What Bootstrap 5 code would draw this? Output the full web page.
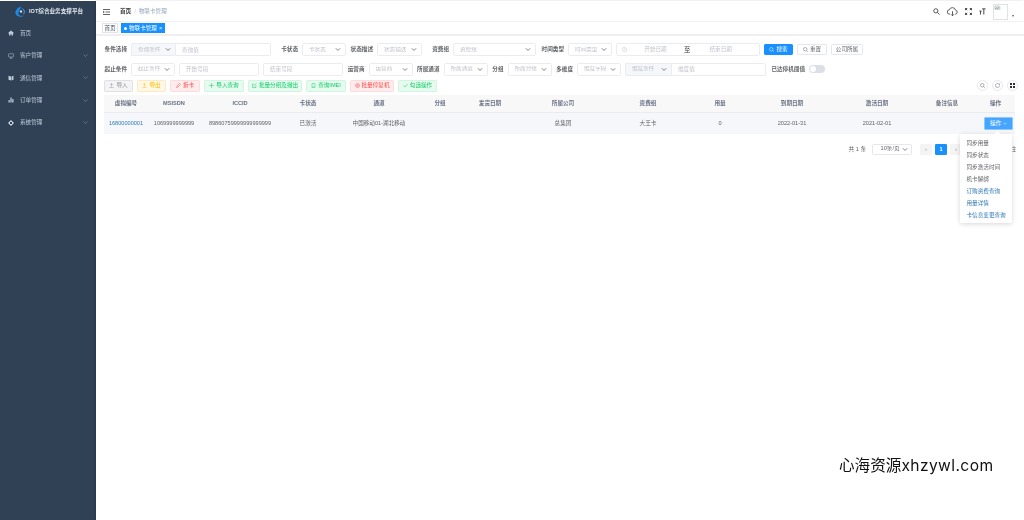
<!DOCTYPE html>
<html lang="zh-CN">
<head>
<meta charset="utf-8">
<title>物联卡管理</title>
<link href="https://cdn.jsdelivr.net/npm/bootstrap@5.3.0/dist/css/bootstrap.min.css" rel="stylesheet">
<style>
html,body{height:520px;overflow:hidden;background:#fff;}
body{font-family:"Liberation Sans","Noto Sans CJK SC",sans-serif;font-size:5.6px;color:#606266;line-height:1.2;}
.app-shell{height:520px;position:relative;padding-top:1px;}
.soft-view{filter:blur(.3px);}
.side-pane{width:96px;flex:none;background:#304156;color:#bfcbd9;}
.side-logo{height:21px;padding-left:14px;gap:3px;color:#dfe6ee;font-weight:700;font-size:5.6px;}
.side-row{height:22.4px;padding:0 8px;gap:6px;color:#bfcbd9;}
.side-row span{flex:1;}
.main-pane{min-width:0;box-shadow:-1px 0 2px rgba(0,0,0,.18);}
.top-head{margin-top:1px;height:20px;padding:0 8px 0 7px;gap:7px;border-bottom:1px solid #f2f2f2;}
.crumb-line{padding-left:3px;}
.crumb-now{color:#97a8be;}
.crumb-home{color:#303133;font-weight:700;}
.crumb-sep{color:#c0c4cc;margin:0 3px;}
.tab-bar{height:14px;padding:1px 6px 2px;gap:3px;border-bottom:2px solid #efefef;}
.tab-plain{border:1px solid #e0e3ea;width:16px;height:10.4px;color:#495060;}
.tab-live{background:#1890ff;color:#fff;width:44px;height:10.4px;gap:2px;}
.tab-dot{width:3.2px;height:3.2px;border-radius:50%;background:#fff;}
.work-area{padding:7px 8px 0;}
.form-line{gap:4px;height:13.4px;margin-bottom:6.2px;}
.field-tag{color:#606266;font-weight:700;text-align:right;white-space:nowrap;flex:none;}
.form-select.mini,.form-control.mini{height:13.4px;min-height:0;font-size:5.6px;line-height:1;padding:0 6px;border:1px solid #e9ecf1;border-radius:1.6px;color:#c0c4cc;box-shadow:none;flex:none;}
.form-select.mini{background-size:6px 5px;background-position:right 4px center;padding-right:10px;}
.form-control.mini::placeholder{color:#c0c4cc;opacity:1;}
.form-select.mini:disabled,.form-select.off{background-color:#f5f7fa;}
.pair{display:flex;flex:none;}
.pair .form-select.mini{border-radius:1.6px 0 0 1.6px;border-right:0;}
.pair .form-control.mini{border-radius:0 1.6px 1.6px 0;}
.wd-12{width:12px}.wd-17{width:17.5px}.wd-23{width:23px}.wd-24{width:24px}.wd-35{width:35px}
.wd-44{width:44px}.wd-45{width:45px}.wd-46{width:46px}.wd-80{width:80px}.wd-83{width:83px}.wd-95{width:95px}.wd-96{width:96px}
.date-box{width:144px;height:13.4px;border:1px solid #e9ecf1;border-radius:1.6px;color:#c0c4cc;padding:0 8px 0 5px;flex:none;}
.date-from{width:57px;text-align:center;flex:none;}
.date-till{flex:1;text-align:center;}
.to-word{flex:none;color:#303133;font-size:6.4px;}
.act-btn{height:11.6px;font-size:5.6px;line-height:1;padding:0;border-radius:1.2px;border:1px solid #e4e7ed;background:#fff;color:#606266;display:inline-flex;align-items:center;justify-content:center;gap:2px;flex:none;}
.act-blue{background:#1890ff;border-color:#1890ff;color:#fff;}
.wb-29{width:29px}.wb-30{width:30px}.wb-32{width:32px}.wb-40{width:40px}.wb-44{width:44px}.wb-54{width:54px}.wb-39{width:39px}
.tone-gray{background:#f4f4f5;border-color:#e0e1e4;color:#909399;}
.tone-amber{background:#fff8e6;border-color:#ffeabf;color:#ffba00;}
.tone-red{background:#ffeded;border-color:#ffdbdb;color:#ff4949;}
.tone-green{background:#e7faf0;border-color:#d0f5e0;color:#13ce66;}
.tool-line{height:12px;margin-bottom:3px;margin-top:-2.2px;}
.tool-set{gap:4px;margin-right:-2px;}
.round-tool{width:11px;height:11px;border:1px solid #e4e7ed;border-radius:50%;background:#fff;}
.grid-table{table-layout:fixed;width:911px;margin:0;font-size:5.6px;color:#606266;}
.grid-table th,.grid-table td{padding:0;text-align:center;vertical-align:middle;border-bottom:0;white-space:nowrap;}
.grid-table th{height:17.4px;background:#f8f8f9;color:#6a7183;font-weight:700;border-bottom:1px solid #e8ecf2;}
.grid-table td{height:21.6px;background:#f5f7fa;color:#606266;}
.cw-44{width:44px}.cw-52{width:52px}.cw-80{width:80px}.cw-56{width:56px}.cw-86{width:86px}.cw-36{width:36px}.cw-64{width:64px}.cw-82{width:82px}.cw-88{width:88px}.cw-58{width:58px}.cw-39{width:39px}
.id-link{color:#337ab7;text-decoration:none;}
.op-holder{position:relative;display:block;}
.op-btn{width:29px;height:13px;margin-left:8px;background:#46a6ff;border:1px solid #8cc8ff;color:#fff;border-radius:1.2px;font-size:5.6px;padding:0;display:flex;align-items:center;justify-content:center;gap:2px;}
.op-menu.dropdown-menu{position:absolute;display:block;top:17.5px;right:3px;left:auto;width:52px;min-width:0;padding:2.5px 0;margin:0;border:0;border-radius:1.6px;font-size:5.6px;box-shadow:0 1px 5px rgba(0,0,0,.16);z-index:5;}
.op-menu::before{content:"";position:absolute;top:-2.5px;right:12px;width:5px;height:5px;background:#fff;transform:rotate(45deg);}
.op-menu .dropdown-item{height:12px;line-height:12px;padding:0 0 0 6.5px;color:#606266;white-space:nowrap;background:transparent;text-align:left;}
.op-menu .dropdown-item.lk{color:#337ab7;}
.page-line{margin-top:9.6px;gap:6px;height:11.4px;}
.page-select.form-select{width:40px;height:11.4px;min-height:0;padding:0 8px 0 7.6px;font-size:5.6px;line-height:1;color:#606266;border:1px solid #e4e7ed;border-radius:1.2px;background-size:6px 5px;background-position:right 3px center;flex:none;}
.pager{gap:4px;margin:0 0 0 2px;}
.pager .page-link{width:12px;height:11.4px;padding:0;border:0;border-radius:1.2px !important;background:#f4f4f5;color:#909399;font-size:5.6px;display:flex;align-items:center;justify-content:center;margin:0;}
.pager .active .page-link{background:#1890ff;color:#fff;font-weight:700;}
.goto-word{color:#606266;width:33px;text-align:right;}
.switch-pill{width:16px;height:8px;background:#dcdfe6;border-radius:4px;flex:none;padding:.8px;}
.switch-knob{width:6.4px;height:6.4px;background:#fff;border-radius:50%;display:block;}
.broken-pic{width:15px;height:16px;border:1px solid #e2e2e2;display:block;}
.caret-mark{font-size:4px;width:4px;color:#5a5e66;align-self:flex-end;margin:0 0 2px -3px;overflow:hidden;}
.water-mark{position:absolute;left:839px;top:455px;font-family:"Inter","Noto Sans CJK SC",sans-serif;font-size:15.6px;line-height:22px;color:#111;white-space:nowrap;}
.water-latin{letter-spacing:.4px;}
</style>
</head>
<body>
<div class="app-shell d-flex">
  <aside class="side-pane soft-view d-flex flex-column">
    <div class="side-logo d-flex align-items-center">
      <svg width="12" height="12" viewBox="0 0 24 24" fill="none"><path d="M15 1C7 3 2 9 3 15c1 6 10 9 18 4-5 1-11 1-12-3-1-5 3-9 6-15Z" fill="#1e88e5"/><path d="M17 5c4 3 5 8 2 11" stroke="#4ba3f0" stroke-width="2"/><circle cx="14" cy="11" r="2.400" fill="#bfe0ff"/></svg>
      <span>IOT综合业务支撑平台</span>
    </div>
    <div class="side-row d-flex align-items-center">
      <svg width="6" height="6" viewBox="0 0 12 12" fill="#bfcbd9"><path d="M6 1 0 6l1 1 1-.8V11h3V8h2v3h3V6.2l1 .8 1-1Z"/></svg><span>首页</span>
    </div>
    <div class="side-row d-flex align-items-center">
      <svg width="6" height="6" viewBox="0 0 12 12" fill="none" stroke="#bfcbd9"><rect x="1" y="1.500" width="10" height="6.500" rx="1"/><path d="M6 8v2.500M3.500 10.500h5"/></svg><span>客户管理</span>
      <svg width="5" height="3" viewBox="0 0 10 6" fill="none" stroke="#7f8ea3" stroke-width="1.200"><path d="m1 1 4 4 4-4"/></svg>
    </div>
    <div class="side-row d-flex align-items-center">
      <svg width="6" height="6" viewBox="0 0 12 12" fill="#bfcbd9"><path d="M1 1.500 6 3v8L1 9.500ZM7 3l4-1.500v8L7 11Z"/></svg><span>通信管理</span>
      <svg width="5" height="3" viewBox="0 0 10 6" fill="none" stroke="#7f8ea3" stroke-width="1.200"><path d="m1 1 4 4 4-4"/></svg>
    </div>
    <div class="side-row d-flex align-items-center">
      <svg width="6" height="6" viewBox="0 0 12 12" fill="#bfcbd9"><path d="M1 6h2.500v5H1ZM4.800 1h2.500v10H4.800ZM8.500 4H11v7H8.500Z"/></svg><span>订单管理</span>
      <svg width="5" height="3" viewBox="0 0 10 6" fill="none" stroke="#7f8ea3" stroke-width="1.200"><path d="m1 1 4 4 4-4"/></svg>
    </div>
    <div class="side-row d-flex align-items-center">
      <svg width="6" height="6" viewBox="0 0 12 12" fill="none" stroke="#dfe6ee" stroke-width="2"><circle cx="6" cy="6" r="3.500"/><path d="M6 0v2M6 10v2M0 6h2M10 6h2" stroke-width="1.500"/></svg><span>系统管理</span>
      <svg width="5" height="3" viewBox="0 0 10 6" fill="none" stroke="#7f8ea3" stroke-width="1.200"><path d="m1 1 4 4 4-4"/></svg>
    </div>
  </aside>

  <main class="main-pane soft-view flex-grow-1">
    <header class="top-head d-flex align-items-center">
      <svg width="7" height="6" viewBox="0 0 14 12" fill="none" stroke="#303133" stroke-width="1.500"><path d="M0 1h14M5 6h9M0 11h14M0 4l2.500 2L0 8"/></svg>
      <div class="crumb-line flex-grow-1"><span class="crumb-home">首页</span><span class="crumb-sep">/</span><span class="crumb-now">物联卡管理</span></div>
      <svg width="7" height="7" viewBox="0 0 16 16" fill="none" stroke="#444" stroke-width="2"><circle cx="6.500" cy="6.500" r="4.800"/><path d="m10 10 5 5"/></svg>
      <svg width="11" height="10" viewBox="0 0 26 22" fill="none" stroke="#444" stroke-width="2"><path d="M7 16H6a5 5 0 0 1-.5-10A7.500 7.500 0 0 1 20 6.500a4.800 4.800 0 0 1 0 9.500h-1"/><path d="M13 9v11M9.500 16.500 13 20l3.500-3.500"/></svg>
      <svg width="7" height="7" viewBox="0 0 16 16" fill="none" stroke="#444" stroke-width="2.200"><path d="M1 5V1h4M15 5V1h-4M1 11v4h4M15 11v4h-4M1 1l4 4M15 1l-4 4M1 15l4-4M15 15l-4-4"/></svg>
      <svg width="7" height="7" viewBox="0 0 16 16" fill="none" stroke="#444" stroke-width="2.200"><path d="M7 2h8M11 2v13M1 7h5M3.500 7v8"/></svg>
      <svg class="broken-pic" viewBox="0 0 15 16"><path d="M1 1h5l1 1v3H1Z" fill="#dfe9f5" stroke="#aaa" stroke-width=".5"/><path d="M1.500 4.500 3 3l1 1 2-1.500" fill="none" stroke="#4a9e4a" stroke-width=".8"/></svg>
      <span class="caret-mark">▾</span>
    </header>

    <nav class="tab-bar d-flex align-items-start">
      <div class="tab-plain d-flex align-items-center justify-content-center">首页</div>
      <div class="tab-live d-flex align-items-center justify-content-center"><i class="tab-dot"></i><span>物联卡管理</span><span>×</span></div>
    </nav>

    <section class="work-area">
      <div class="form-line d-flex align-items-center">
        <label class="field-tag wd-23">条件选择</label>
        <div class="pair"><select class="form-select mini off wd-44" disabled><option>查询条件</option></select><input class="form-control mini wd-96" placeholder="查询值"></div>
        <label class="field-tag wd-23">卡状态</label>
        <select class="form-select mini wd-44"><option>卡状态</option></select>
        <label class="field-tag wd-23">状态描述</label>
        <select class="form-select mini wd-45"><option>状态描述</option></select>
        <label class="field-tag wd-23">资费组</label>
        <select class="form-select mini wd-83"><option>资费组</option></select>
        <label class="field-tag wd-24">时间类型</label>
        <select class="form-select mini wd-44"><option>时间类型</option></select>
        <div class="date-box d-flex align-items-center">
          <svg width="5" height="5" viewBox="0 0 10 10" fill="none" stroke="#c0c4cc"><circle cx="5" cy="5" r="4.300"/><path d="M5 2.500V5l2 1"/></svg>
          <span class="date-from">开始日期</span><span class="to-word">至</span><span class="date-till">结束日期</span>
        </div>
        <button class="act-btn act-blue wb-29" type="button"><svg width="5" height="5" viewBox="0 0 10 10" fill="none" stroke="#fff"><circle cx="4.500" cy="4.500" r="3.500"/><path d="m7 7 2.500 2.500"/></svg>搜索</button>
        <button class="act-btn wb-30" type="button"><svg width="5" height="5" viewBox="0 0 10 10" fill="none" stroke="#606266"><circle cx="4.500" cy="4.500" r="3.500"/><path d="m7 7 2.500 2.500"/></svg>重置</button>
        <button class="act-btn wb-32" type="button">公司所属</button>
      </div>

      <div class="form-line d-flex align-items-center">
        <label class="field-tag wd-23">起止条件</label>
        <select class="form-select mini wd-44"><option>起止条件</option></select>
        <input class="form-control mini wd-80" placeholder="开始号段">
        <input class="form-control mini wd-80" placeholder="结束号段">
        <label class="field-tag wd-17">运营商</label>
        <select class="form-select mini wd-44"><option>运营商</option></select>
        <label class="field-tag wd-23">所属通道</label>
        <select class="form-select mini wd-44"><option>所属通道</option></select>
        <label class="field-tag wd-12">分组</label>
        <select class="form-select mini wd-44"><option>所属分组</option></select>
        <label class="field-tag wd-17">多维度</label>
        <select class="form-select mini wd-44"><option>维度字段</option></select>
        <div class="pair"><select class="form-select mini off wd-46" disabled><option>维度条件</option></select><input class="form-control mini wd-95" placeholder="维度值"></div>
        <label class="field-tag wd-35">已达停机阈值</label>
        <span class="switch-pill"><i class="switch-knob"></i></span>
      </div>

      <div class="tool-line d-flex align-items-center justify-content-between">
        <div class="d-flex align-items-center gap-1">
          <button class="act-btn tone-gray wb-29" type="button"><svg width="5" height="5" viewBox="0 0 10 10" fill="none" stroke="currentColor"><path d="M1 9h8M5 7V1M2.500 3.500 5 1l2.500 2.500"/></svg>导入</button>
          <button class="act-btn tone-amber wb-29" type="button"><svg width="5" height="5" viewBox="0 0 10 10" fill="none" stroke="currentColor"><path d="M1 9h8M5 7V1M2.500 3.500 5 1l2.500 2.500"/></svg>导出</button>
          <button class="act-btn tone-red wb-30" type="button"><svg width="5" height="5" viewBox="0 0 10 10" fill="none" stroke="currentColor"><path d="m1 9 1-3 5-5 2 2-5 5Z"/></svg>拆卡</button>
          <button class="act-btn tone-green wb-40" type="button"><svg width="5" height="5" viewBox="0 0 10 10" fill="none" stroke="currentColor"><path d="M5 0v10M0 5h10"/></svg>导入查询</button>
          <button class="act-btn tone-green wb-54" type="button"><svg width="5" height="5" viewBox="0 0 10 10" fill="none" stroke="currentColor"><path d="M8 5v4H1V2h4M4 6l5-5"/></svg>批量分组及撤出</button>
          <button class="act-btn tone-green wb-40" type="button"><svg width="5" height="5" viewBox="0 0 10 10" fill="none" stroke="currentColor"><rect x="2" y="1" width="6" height="7" rx="1"/><path d="M1 9.500h8"/></svg>查询IMEI</button>
          <button class="act-btn tone-red wb-44" type="button"><svg width="5" height="5" viewBox="0 0 10 10" fill="none" stroke="currentColor"><circle cx="5" cy="5" r="4"/><circle cx="5" cy="5" r="1.500"/></svg>批量停复机</button>
          <button class="act-btn tone-green wb-39" type="button"><svg width="5" height="5" viewBox="0 0 10 10" fill="none" stroke="currentColor"><path d="m1 5 3 3 5-6"/></svg>勾选操作</button>
        </div>
        <div class="tool-set d-flex">
          <span class="round-tool d-flex align-items-center justify-content-center"><svg width="5" height="5" viewBox="0 0 10 10" fill="none" stroke="#606266"><circle cx="4.500" cy="4.500" r="3.500"/><path d="m7 7 2.500 2.500"/></svg></span>
          <span class="round-tool d-flex align-items-center justify-content-center"><svg width="5" height="5" viewBox="0 0 10 10" fill="none" stroke="#606266"><path d="M9 5a4 4 0 1 1-1.200-2.800L9 3.500V1"/></svg></span>
          <span class="round-tool d-flex align-items-center justify-content-center"><svg width="5" height="5" viewBox="0 0 10 10" fill="#303133"><path d="M0 0h4v4H0ZM6 0h4v4H6ZM0 6h4v4H0ZM6 6h4v4H6Z"/></svg></span>
        </div>
      </div>

      <table class="table grid-table">
        <colgroup>
          <col class="cw-44"><col class="cw-52"><col class="cw-80"><col class="cw-56"><col class="cw-86"><col class="cw-36"><col class="cw-64"><col class="cw-82"><col class="cw-88"><col class="cw-56"><col class="cw-88"><col class="cw-82"><col class="cw-58"><col class="cw-39">
        </colgroup>
        <thead>
          <tr><th>虚拟编号</th><th>MSISDN</th><th>ICCID</th><th>卡状态</th><th>通道</th><th>分组</th><th>发货日期</th><th>所属公司</th><th>资费组</th><th>用量</th><th>到期日期</th><th>激活日期</th><th>备注信息</th><th>操作</th></tr>
        </thead>
        <tbody>
          <tr>
            <td><a class="id-link" href="#">16800000001</a></td><td>1069999999999</td><td>89860759999999999999</td><td>已激活</td><td>中国移动01-湖北移动</td><td></td><td></td><td>总集团</td><td>大王卡</td><td>0</td><td>2022-01-31</td><td>2021-02-01</td><td></td>
            <td>
              <div class="op-holder">
                <button class="op-btn" type="button">操作<svg width="4" height="3" viewBox="0 0 8 5" fill="none" stroke="#fff"><path d="m1 1 3 3 3-3"/></svg></button>
                <ul class="dropdown-menu show op-menu list-unstyled">
                  <li><a class="dropdown-item" href="#">同步用量</a></li>
                  <li><a class="dropdown-item" href="#">同步状态</a></li>
                  <li><a class="dropdown-item" href="#">同步激活时间</a></li>
                  <li><a class="dropdown-item" href="#">机卡解绑</a></li>
                  <li><a class="dropdown-item lk" href="#">订购资费查询</a></li>
                  <li><a class="dropdown-item lk" href="#">用量详情</a></li>
                  <li><a class="dropdown-item lk" href="#">卡信息变更查询</a></li>
                </ul>
              </div>
            </td>
          </tr>
        </tbody>
      </table>

      <div class="page-line d-flex align-items-center justify-content-end">
        <span>共 1 条</span>
        <select class="form-select page-select"><option>10条/页</option></select>
        <ul class="pagination pager">
          <li class="page-item"><a class="page-link" href="#">‹</a></li>
          <li class="page-item active"><a class="page-link" href="#">1</a></li>
          <li class="page-item"><a class="page-link" href="#">›</a></li>
          <li class="page-item"><a class="page-link" href="#">›</a></li>
        </ul>
        <span class="goto-word">前往</span>
      </div>
    </section>
  </main>
  <div class="water-mark">心海资源<span class="water-latin">xhzywl.com</span></div>
</div>
<script src="https://cdn.jsdelivr.net/npm/bootstrap@5.3.0/dist/js/bootstrap.bundle.min.js"></script>
</body>
</html>
